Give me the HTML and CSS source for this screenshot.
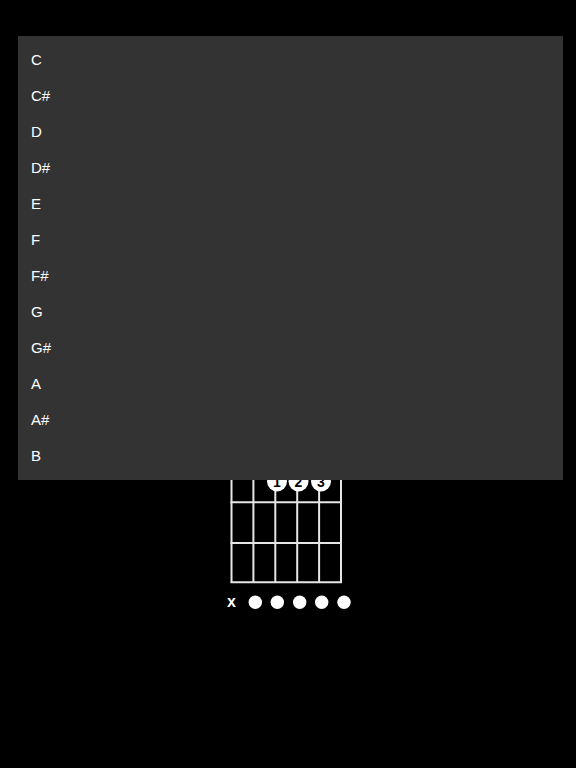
FILE: index.html
```html
<!DOCTYPE html>
<html>
<head>
<meta charset="utf-8">
<link rel="stylesheet" href="styles.css">
</head>
<body>
<main class="stage">
  <svg class="chord" width="140" height="176" viewBox="0 0 140 176">
    <g class="strings">
      <line x1="11.5" y1="0" x2="11.5" y2="142.3"/>
      <line x1="33.4" y1="0" x2="33.4" y2="142.3"/>
      <line x1="55.3" y1="0" x2="55.3" y2="142.3"/>
      <line x1="77.2" y1="0" x2="77.2" y2="142.3"/>
      <line x1="99.1" y1="0" x2="99.1" y2="142.3"/>
      <line x1="121" y1="0" x2="121" y2="142.3"/>
    </g>
    <g class="frets">
      <line x1="10.5" y1="22" x2="122" y2="22"/>
      <line x1="10.5" y1="62.3" x2="122" y2="62.3"/>
      <line x1="10.5" y1="103" x2="122" y2="103"/>
      <line x1="10.5" y1="142.3" x2="122" y2="142.3"/>
    </g>
    <g class="fingers">
      <circle cx="57" cy="41.5" r="10"/>
      <circle cx="78.5" cy="41.5" r="10"/>
      <circle cx="101" cy="41.5" r="10"/>
    </g>
    <g class="finger-nums">
      <text x="57" y="46.7">1</text>
      <text x="78.5" y="46.7">2</text>
      <text x="101" y="46.7">3</text>
    </g>
    <text class="mute" x="11.5" y="167">x</text>
    <g class="open">
      <circle cx="35.3" cy="162.3" r="6.7"/>
      <circle cx="57.3" cy="162.3" r="6.7"/>
      <circle cx="79.7" cy="162.3" r="6.7"/>
      <circle cx="101.7" cy="162.3" r="6.7"/>
      <circle cx="124" cy="162.3" r="6.7"/>
    </g>
  </svg>
</main>
<ul class="menu">
  <li class="menu-item">C</li>
  <li class="menu-item">C#</li>
  <li class="menu-item">D</li>
  <li class="menu-item">D#</li>
  <li class="menu-item">E</li>
  <li class="menu-item">F</li>
  <li class="menu-item">F#</li>
  <li class="menu-item">G</li>
  <li class="menu-item">G#</li>
  <li class="menu-item">A</li>
  <li class="menu-item">A#</li>
  <li class="menu-item">B</li>
</ul>
</body>
</html>
```
FILE: styles.css
```css
html, body {
  margin: 0;
  padding: 0;
  background: #000;
  width: 576px;
  height: 768px;
  overflow: hidden;
  font-family: "Liberation Sans", Arial, sans-serif;
}
.stage {
  display: flex;
  padding: 440px 0 0 220px;
}
.chord {
  display: block;
}
.strings line, .frets line {
  stroke: #e6e6e6;
  stroke-width: 2;
}
.fingers circle, .open circle {
  fill: #fff;
}
.finger-nums text {
  fill: #000;
  font-family: "Liberation Sans", Arial, sans-serif;
  font-weight: bold;
  font-size: 14px;
  text-anchor: middle;
}
.mute {
  fill: #fff;
  font-family: "Liberation Sans", Arial, sans-serif;
  font-weight: bold;
  font-size: 16px;
  text-anchor: middle;
}
.menu {
  position: absolute;
  top: 36px;
  left: 18px;
  width: 545px;
  margin: 0;
  padding: 6px 0;
  list-style: none;
  background: #333333;
}
.menu-item {
  height: 36px;
  line-height: 36px;
  padding-left: 13px;
  color: #fff;
  font-size: 15px;
}
```
